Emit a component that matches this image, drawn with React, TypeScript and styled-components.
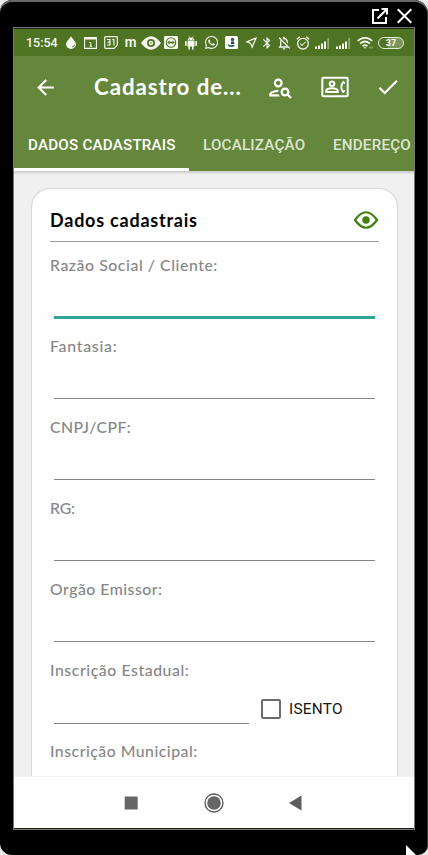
import React from 'react';
import styled, { createGlobalStyle } from 'styled-components';
import {
  MdArrowBack,
  MdBluetooth,
  MdOutlineAlarmOn,
  MdOutlineNearMe,
  MdOutlineNotificationsOff,
  MdOutlinePersonSearch,
  MdCheck,
} from 'react-icons/md';
import { FaWhatsapp } from 'react-icons/fa';

const GlobalStyle = createGlobalStyle`
  * { box-sizing: border-box; }
  html, body { margin: 0; background: #e9ebe9; overflow: hidden; }
  svg { display: block; flex: none; }
`;

const Frame = styled.div`
  position: relative;
  width: 428px;
  height: 855px;
  display: flex;
  flex-direction: column;
  padding: 0 13px;
  background: #000;
  border-radius: 12px 14px 10px 12px;
  box-shadow: inset 0 2px 0 #666869, inset -1px 0 0 #333;
  overflow: hidden;
`;

const WindowBar = styled.div`
  flex: none;
  height: 27px;
  display: flex;
  justify-content: flex-end;
  gap: 9px;
  padding: 8px 3px 0 0;
`;

const Screen = styled.div`
  flex: none;
  width: 402px;
  height: 803px;
  display: flex;
  flex-direction: column;
  border: 1px solid #777;
  background: #f0f0f0;
  overflow: hidden;
`;

const StatusBar = styled.div`
  flex: none;
  height: 28px;
  display: flex;
  align-items: center;
  padding-left: 12px;
  background: #4e7322;
  border-top: 1px solid #1b2611;
  color: #f4f8ee;
  font-family: Roboto, sans-serif;
`;

const Clock = styled.span`
  width: 32px;
  font-size: 12.5px;
  font-weight: 500;
  line-height: 26px;
  white-space: nowrap;
`;

const StatusItem = styled.span<{ $w: number; $gap: number }>`
  flex: none;
  display: flex;
  justify-content: center;
  width: ${(p) => p.$w}px;
  margin-left: ${(p) => p.$gap}px;
`;

const StatusM = styled.span`
  font-size: 15px;
  font-weight: 600;
  line-height: 15px;
  transform: scaleX(0.9);
`;

const Battery = styled.span`
  width: 26px;
  height: 12px;
  border: 1.3px solid #e4ecda;
  border-radius: 6px;
  background: linear-gradient(90deg, #4e7322 38%, #7a9657 38%);
  font-size: 9px;
  font-weight: 700;
  line-height: 10px;
  text-align: center;
`;

const AppBar = styled.header`
  flex: none;
  height: 63px;
  display: flex;
  align-items: center;
  padding: 0 13px 1px 19px;
  background: #64873b;
  color: #fff;
`;

const Title = styled.h1`
  flex: none;
  width: 173px;
  margin: 0 0 0 36px;
  font: 700 22.3px/30px Lato, sans-serif;
  letter-spacing: 0.92px;
  white-space: nowrap;
`;

const Actions = styled.div`
  flex: 1;
  display: flex;
  align-items: center;
  justify-content: space-between;
`;

const Tabs = styled.nav`
  flex: none;
  height: 52px;
  display: flex;
  background: #64873b;
  box-shadow: 0 2px 2px rgba(0, 0, 0, 0.15);
`;

const Tab = styled.div<{ $active?: boolean; $w: number }>`
  flex: none;
  width: ${(p) => p.$w}px;
  padding-left: 14px;
  border-bottom: 3px solid ${(p) => (p.$active ? '#fff' : 'transparent')};
  color: ${(p) => (p.$active ? '#fff' : '#dce4d2')};
  font: 500 15.2px/53px Roboto, sans-serif;
  letter-spacing: 0.2px;
  white-space: nowrap;
`;

const Content = styled.main`
  flex: 1;
  min-height: 0;
  padding: 18px 17px 0 18px;
  overflow: hidden;
`;

const Card = styled.section`
  height: 640px;
  padding: 0 18px;
  background: #fefefe;
  border-radius: 18px;
  box-shadow: 0 0 2px rgba(0, 0, 0, 0.32);
`;

const CardHead = styled.div`
  height: 53px;
  display: flex;
  align-items: center;
  justify-content: space-between;
  padding-top: 9px;
  border-bottom: 1px solid #999;
`;

const CardTitle = styled.h2`
  margin: 0;
  font: 700 18px/24px Lato, sans-serif;
  letter-spacing: 0.77px;
  color: #050505;
  white-space: nowrap;
`;

const Field = styled.div`
  height: 81.1px;
  display: flex;
  flex-direction: column;
  justify-content: space-between;
  padding-top: 11.5px;
`;

const Label = styled.label<{ $track: number }>`
  font: 500 15.8px/22px Lato, sans-serif;
  letter-spacing: ${(p) => p.$track}px;
  color: #878787;
  white-space: nowrap;
`;

const InputRow = styled.div`
  height: 47px;
  display: flex;
  padding: 0 4px;
  gap: 12px;
`;

const Input = styled.div<{ $focus?: boolean; $short?: boolean }>`
  flex: ${(p) => (p.$short ? '0 0 195px' : '1')};
  height: ${(p) => (p.$focus ? 43 : 42)}px;
  border-bottom: ${(p) => (p.$focus ? '3px solid #2fa497' : '1px solid #858585')};
`;

const Check = styled.div`
  display: flex;
  align-items: center;
  gap: 8px;
  height: 54px;
  color: #161616;
  font: 400 15.4px/20px Roboto, sans-serif;
  letter-spacing: 0.25px;
`;

const Box = styled.span`
  width: 20px;
  height: 20px;
  border: 2px solid #6c6c6c;
  border-radius: 2px;
`;

const NavBar = styled.footer`
  flex: none;
  height: 53px;
  display: flex;
  align-items: center;
  background: #fefefe;
  padding-left: 110px;
  gap: 65.500px;
  border-top: 1px solid #f3f3f3;
  border-bottom: 1px solid #1c2418;
`;

const Cursor = styled.svg`
  position: absolute;
  left: 405px;
  top: 844px;
`;

const fields = [
  { label: 'Razão Social / Cliente:', track: 0.57 },
  { label: 'Fantasia:', track: 0.75 },
  { label: 'CNPJ/CPF:', track: 0.42 },
  { label: 'RG:', track: -0.2 },
  { label: 'Orgão Emissor:', track: 0.5 },
  { label: 'Inscrição Estadual:', track: 0.57 },
  { label: 'Inscrição Municipal:', track: 0.5 },
];

const Signal = () => (
  <svg width="15" height="12" viewBox="0 0 15 12" fill="currentColor">
    <path d="M0 9.500h2V12H0zM3 8.500h2V12H3zM6 6.500h2V12H6zM9 4.500h2V12H9z" />
    <path d="M12.300 1h1.800v11h-1.800z" opacity=".4" />
  </svg>
);

function StatusIcons() {
  return (
    <>
      <StatusItem $w={10} $gap={8}>
        <svg width="10" height="13" viewBox="0 0 10 13" fill="currentColor">
          <path d="M5 0C5.500 2 10 5.500 10 8.300A4.800 4.500 0 0 1 0 8.300C0 5.500 4.500 2 5 0z" />
          <path d="M6 11c1.400-.2 2.300-1 2.500-2.400" fill="none" stroke="#4e7322" strokeWidth=".9" />
        </svg>
      </StatusItem>
      <StatusItem $w={13} $gap={8}>
        <svg width="13" height="12" viewBox="0 0 13 12" fill="none" stroke="currentColor">
          <path d="M.6.6h11.800v10.800H.6z" strokeWidth="1.100" />
          <path d="M1 1.500h11" strokeWidth="2" />
          <path d="M5.300 5.500h1.500v4M5.500 9.200h2.700" strokeWidth="1" />
        </svg>
      </StatusItem>
      <StatusItem $w={14} $gap={7}>
        <svg width="14" height="13" viewBox="0 0 14 13" fill="none" stroke="currentColor" strokeWidth="1.200">
          <path d="M1.500.7h11a.8.8 0 0 1 .8.8v7.600l-3.200 3.200H1.500a.8.8 0 0 1-.8-.8v-10a.8.8 0 0 1 .8-.8z" />
          <path d="M3 3.500h3v5.500H3M3.600 6.100H6M8.300 3.600h1.600v6" />
        </svg>
      </StatusItem>
      <StatusItem $w={12} $gap={7}>
        <StatusM>m</StatusM>
      </StatusItem>
      <StatusItem $w={20} $gap={4}>
        <svg width="20" height="14" viewBox="0 0 20 14">
          <path d="M0 7Q10-6.500 20 7 10 20.500 0 7z" fill="currentColor" />
          <circle cx="10" cy="7" r="4" fill="#4e7322" />
          <circle cx="10" cy="7" r="2.200" fill="currentColor" />
          <circle cx="10" cy="7" r=".8" fill="#4e7322" />
        </svg>
      </StatusItem>
      <StatusItem $w={14} $gap={3}>
        <svg width="14" height="13" viewBox="0 0 14 13">
          <rect width="14" height="13" rx="1.200" fill="currentColor" />
          <circle cx="7" cy="6.500" r="4.700" fill="none" stroke="#4e7322" strokeWidth="1.100" />
          <path d="M3.300 6.500 5.600 4.500v1.300h2.800V4.500l2.300 2-2.300 2V7.200H5.600v1.300z" fill="#4e7322" />
        </svg>
      </StatusItem>
      <StatusItem $w={12} $gap={7}>
        <svg width="12" height="14" viewBox="0 0 12 14" fill="currentColor">
          <path d="M2.500 4.400C2.600 2.700 4 1.500 6 1.500s3.400 1.200 3.500 2.900zM2.500 5h7v5.600H8.600V13a.8.8 0 0 1-1.600 0v-2.400H5V13a.8.8 0 0 1-1.600 0v-2.400h-.9z" />
          <rect y="5" width="1.700" height="5" rx=".8" />
          <rect x="10.300" y="5" width="1.700" height="5" rx=".8" />
          <path d="m3.500 0 1.300 2M8.500 0 7.200 2" stroke="currentColor" strokeWidth=".6" />
          <path d="M4.300 2.700h.8v.8h-.8zM7 2.700h.8v.8H7z" fill="#4e7322" />
        </svg>
      </StatusItem>
      <StatusItem $w={14} $gap={7}>
        <FaWhatsapp size={15} />
      </StatusItem>
      <StatusItem $w={13} $gap={7}>
        <svg width="13" height="13" viewBox="0 0 13 13">
          <rect width="13" height="13" rx="1.500" fill="#fff" />
          <circle cx="7.500" cy="3.500" r="1.700" fill="#375659" />
          <path d="M6 5.500h3l.5 2.500H6zM3.500 9.300l6.500-.3-1.700 1.800H4z" fill="#25484d" />
          <circle cx="3.600" cy="9" r="1" fill="#43969e" />
        </svg>
      </StatusItem>
      <StatusItem $w={13} $gap={7}>
        <MdOutlineNearMe size={15} />
      </StatusItem>
      <StatusItem $w={10} $gap={4}>
        <MdBluetooth size={14} />
      </StatusItem>
      <StatusItem $w={14} $gap={5}>
        <MdOutlineNotificationsOff size={16} />
      </StatusItem>
      <StatusItem $w={14} $gap={5}>
        <MdOutlineAlarmOn size={16} />
      </StatusItem>
      <StatusItem $w={15} $gap={5}>
        <Signal />
      </StatusItem>
      <StatusItem $w={15} $gap={6}>
        <Signal />
      </StatusItem>
      <StatusItem $w={16} $gap={6}>
        <svg width="16" height="12" viewBox="0 0 16 12" fill="none" stroke="currentColor" strokeWidth="1.700">
          <path d="M.7 4C5-.2 11-.2 15.300 4M3.100 6.700c3-2.700 6.800-2.700 9.800 0M5.500 9.200c1.500-1.300 3.500-1.300 5 0" />
          <path d="m6.500 10.300 1.500 1.500 1.500-1.500z" fill="currentColor" stroke="none" />
          <path d="M13 9.500v2M15 9.500v2" strokeWidth="1" opacity=".5" />
        </svg>
      </StatusItem>
      <StatusItem $w={26} $gap={5}>
        <Battery>37</Battery>
      </StatusItem>
    </>
  );
}

export default function App() {
  return (
    <>
      <GlobalStyle />
      <Frame>
        <WindowBar>
          <svg width="16" height="16" viewBox="0 0 16 16" fill="none" stroke="#fff" strokeWidth="2">
            <path d="M7 2H1v13h13V9M5.500 10.500 14 2M9.500 1H15v5.500" />
          </svg>
          <svg width="15" height="16" viewBox="0 0 15 16" fill="none" stroke="#fff" strokeWidth="2">
            <path d="m.7 1.200 13.600 13.600M14.300 1.200.7 14.800" />
          </svg>
        </WindowBar>
        <Screen>
          <StatusBar>
            <Clock>15:54</Clock>
            <StatusIcons />
          </StatusBar>
          <AppBar>
            <MdArrowBack size={25} />
            <Title>Cadastro de...</Title>
            <Actions>
              <MdOutlinePersonSearch size={27} />
              <svg width="28" height="22" viewBox="0 0 28 22" fill="none" stroke="currentColor" strokeWidth="2">
                <rect x="1.300" y="1.700" width="25.400" height="18.600" rx="1" />
                <circle cx="11" cy="7.800" r="2.300" />
                <path d="M5.200 16v-1c0-3.700 11.600-3.700 11.600 0v1z" />
                <path d="M23 5.500c-3.600 2.700-3.600 8.300 0 11" strokeWidth="1.700" />
                <path d="m22 5.600 1.700 2M22 16.400l1.700-2" strokeWidth="1.700" />
              </svg>
              <MdCheck size={26} />
            </Actions>
          </AppBar>
          <Tabs>
            <Tab $w={175} $active>DADOS CADASTRAIS</Tab>
            <Tab $w={130}>LOCALIZAÇÃO</Tab>
            <Tab $w={120}>ENDEREÇO</Tab>
          </Tabs>
          <Content>
            <Card>
              <CardHead>
                <CardTitle>Dados cadastrais</CardTitle>
                <svg width="26" height="20" viewBox="0 0 26 20">
                  <path d="M2 10Q13-5.500 24 10 13 25.500 2 10z" fill="none" stroke="#43810f" strokeWidth="2.200" />
                  <circle cx="13" cy="10" r="3.700" fill="#43810f" />
                </svg>
              </CardHead>
              {fields.map((f, i) => (
                <Field key={f.label}>
                  <Label $track={f.track}>{f.label}</Label>
                  <InputRow>
                    <Input $focus={i === 0} $short={i === 5} />
                    {i === 5 && (
                      <Check>
                        <Box />
                        ISENTO
                      </Check>
                    )}
                  </InputRow>
                </Field>
              ))}
            </Card>
          </Content>
          <NavBar>
            <svg width="14" height="14" viewBox="0 0 14 14">
              <rect x=".7" y=".5" width="13" height="13" rx=".6" fill="#666" />
            </svg>
            <svg width="20" height="20" viewBox="0 0 20 20">
              <circle cx="10" cy="10" r="9" fill="none" stroke="#555" strokeWidth="1.300" />
              <circle cx="10" cy="10" r="6.800" fill="#666" />
            </svg>
            <svg width="13" height="16" viewBox="0 0 13 16">
              <path d="M0 8 12.500.5v15z" fill="#5d5d5d" />
            </svg>
          </NavBar>
        </Screen>
        <Cursor width="14" height="11" viewBox="0 0 14 11">
          <path d="M1 1v10h10z" fill="#fff" />
        </Cursor>
      </Frame>
    </>
  );
}
